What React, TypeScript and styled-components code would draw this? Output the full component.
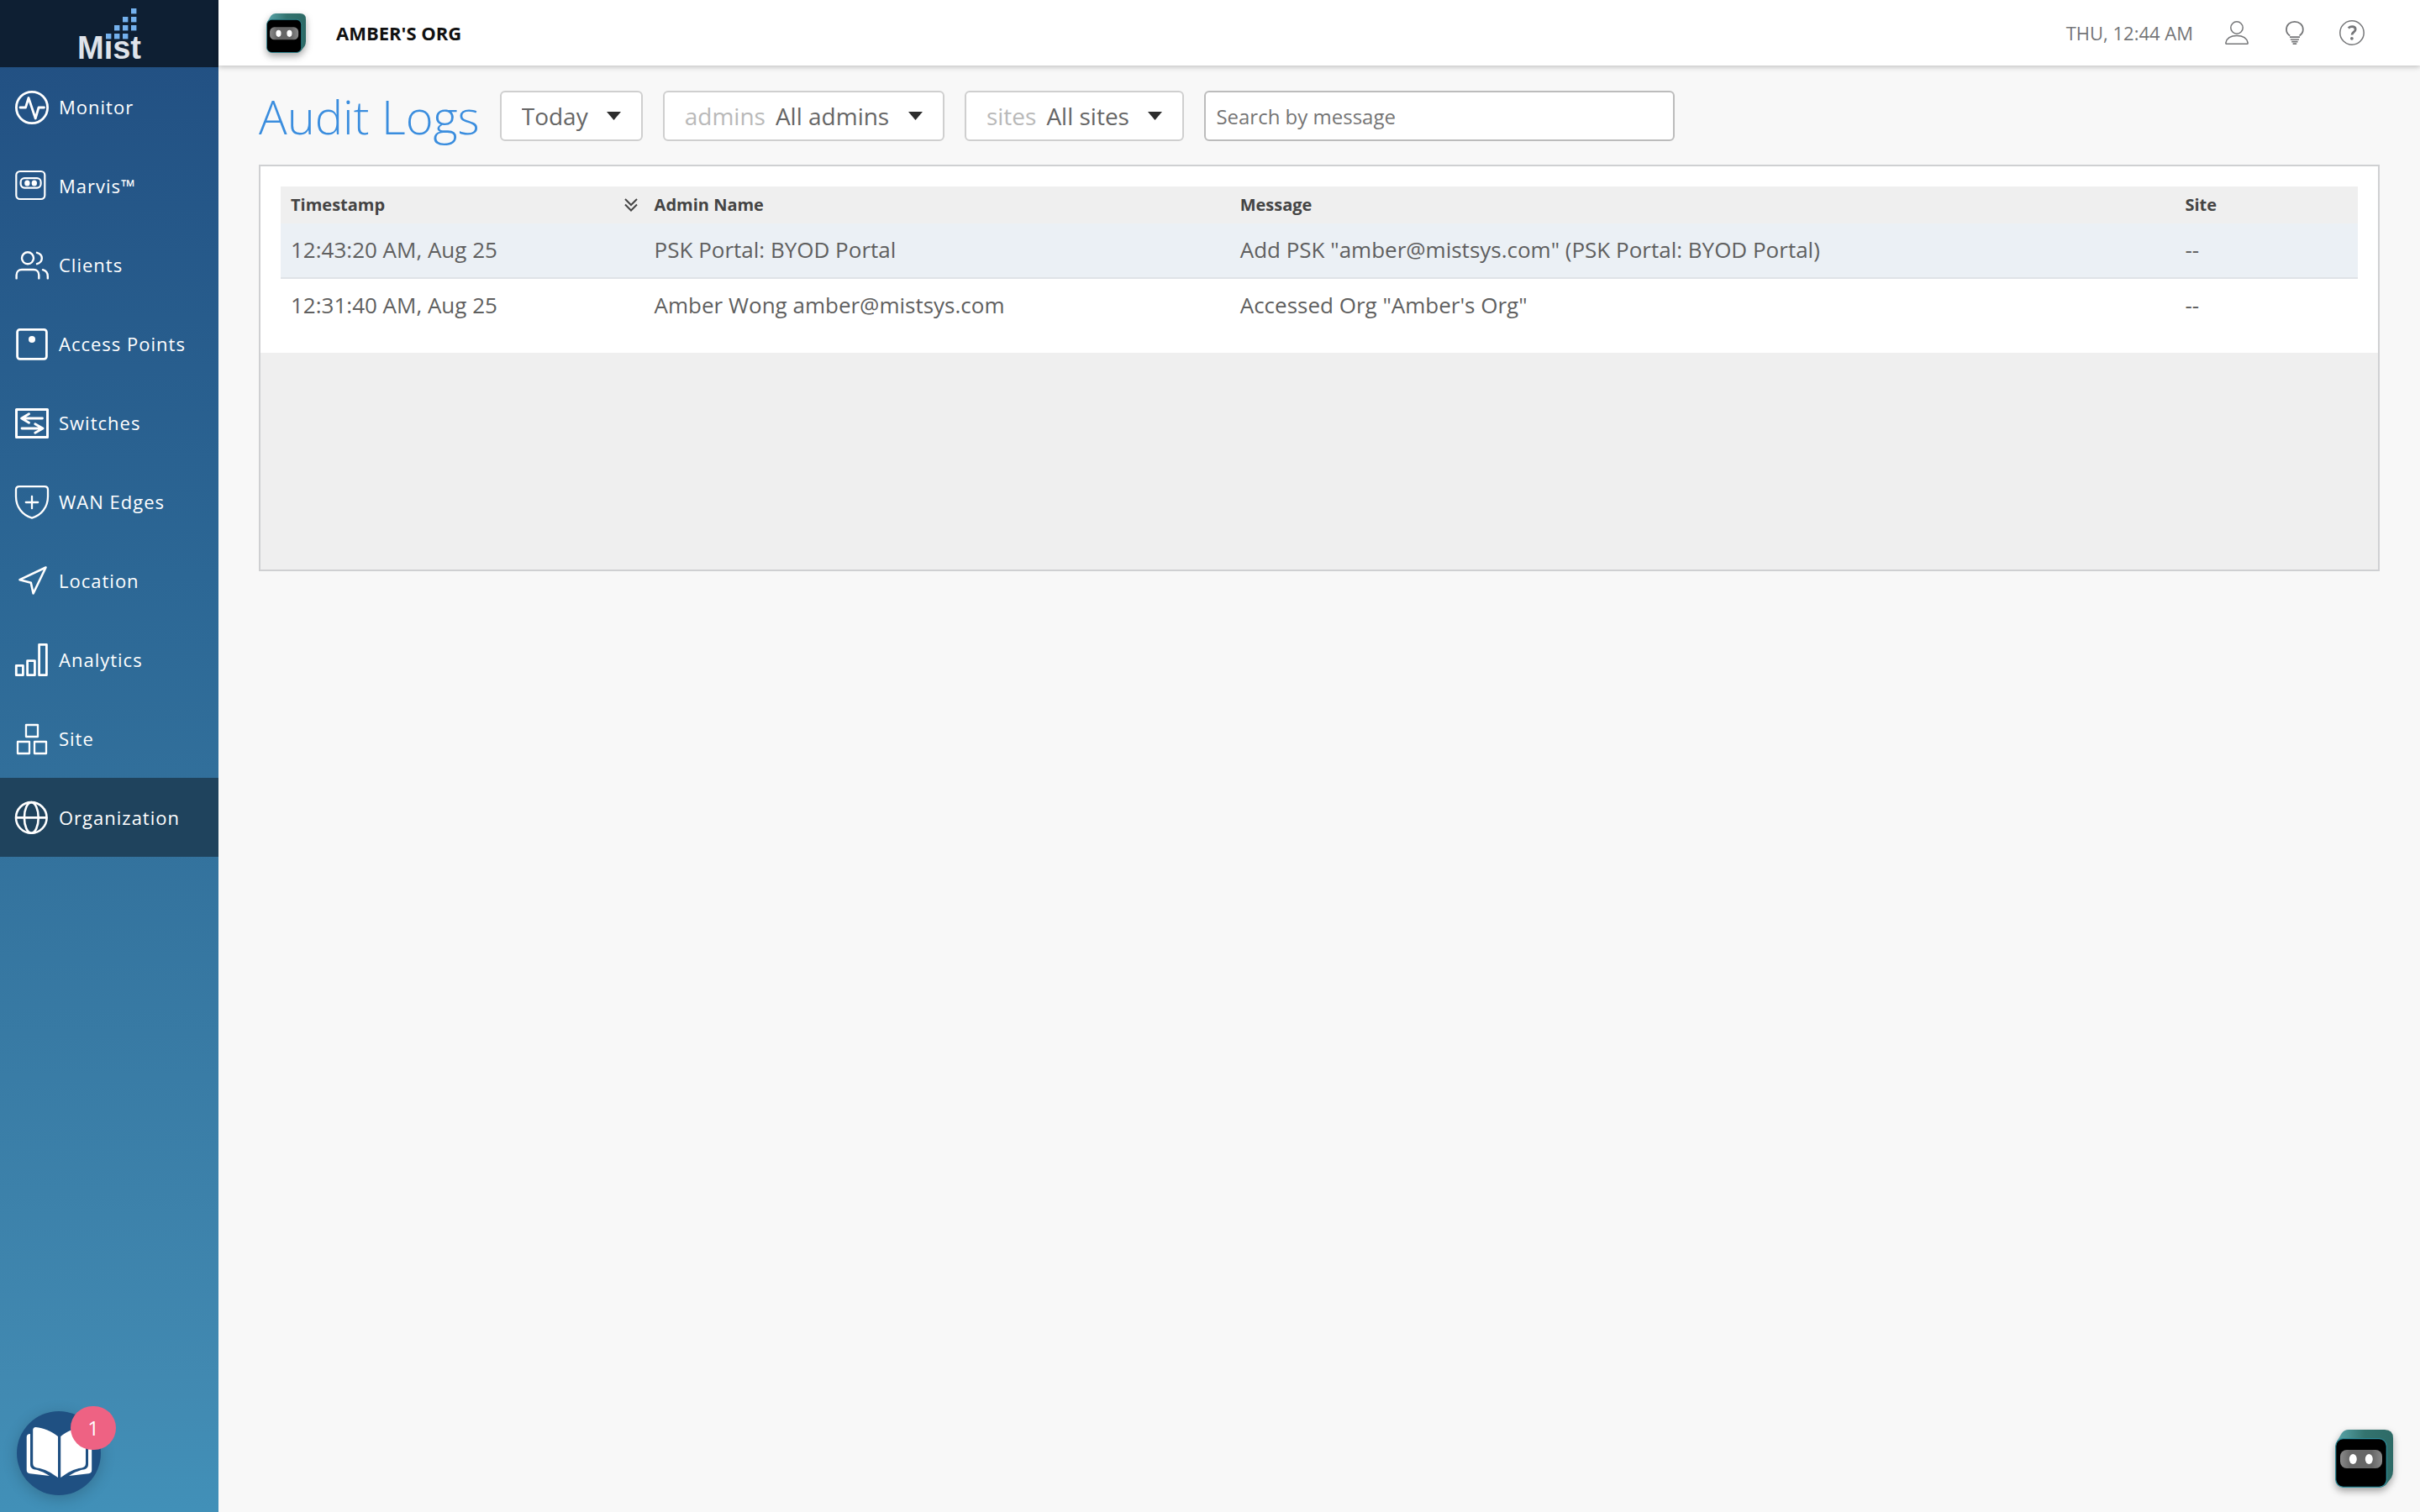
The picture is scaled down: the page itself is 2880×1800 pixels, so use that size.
import React from 'react';
import styled, { createGlobalStyle } from 'styled-components';

const GlobalStyle = createGlobalStyle`
  *, *::before, *::after { box-sizing: border-box; }
  body {
    margin: 0;
    background: #f8f8f8;
    color: #5f5f5f;
    font-family: "Open Sans", "Noto Sans", sans-serif;
    font-size: 26px;
  }
  button, input, select { font: inherit; color: inherit; }
`;

const Shell = styled.div`
  display: flex;
  min-height: 100vh;
`;

const Sidebar = styled.aside`
  flex: 0 0 260px;
  background: linear-gradient(180deg, #214e81 0%, #2c6795 38%, #33729d 56%, #4189b1 91%, #4190b8 100%);
`;

const LogoLink = styled.a`
  display: flex;
  justify-content: center;
  height: 80px;
  background: #0e1f33;
`;

const LogoText = styled.text`
  font-family: "Liberation Sans", Arial, sans-serif;
  font-size: 38px;
  font-weight: 700;
  fill: #dfe3ea;
`;

const NavLink = styled.a<{ $active?: boolean }>`
  display: flex;
  align-items: center;
  gap: 12px;
  height: 94px;
  padding: 0 18px;
  color: #fff;
  font-size: 22px;
  font-weight: 500;
  letter-spacing: 1px;
  line-height: 30px;
  text-decoration: none;
  white-space: nowrap;
  background: ${(p) => (p.$active ? '#1f435d' : 'transparent')};
`;

const NavIcon = styled.svg`
  flex: none;
  width: 40px;
  height: 40px;
  overflow: visible;
  fill: none;
  stroke: #fff;
  stroke-width: 2.8;
  stroke-linecap: round;
  stroke-linejoin: round;
`;

const Main = styled.div`
  flex: 1;
  min-width: 0;
`;

const TopBar = styled.header`
  position: relative;
  display: flex;
  align-items: center;
  height: 78px;
  padding: 0 66px 0 57px;
  background: #fff;
  box-shadow: 0 2px 6px rgba(0, 0, 0, 0.22);
`;

const IconButton = styled.button`
  display: flex;
  padding: 0;
  border: 0;
  background: none;
  color: #757678;
  cursor: pointer;
`;

const OrgName = styled.div`
  margin-left: 36px;
  color: #111;
  font-size: 22px;
  font-weight: 700;
  line-height: 30px;
`;

const TopTools = styled.div`
  display: flex;
  align-items: center;
  gap: 38px;
  margin-left: auto;
  color: #757678;
  font-size: 22px;
  line-height: 30px;
`;

const ToolIcon = styled.svg`
  width: 30px;
  height: 30px;
  overflow: visible;
  fill: none;
  stroke: currentColor;
  stroke-width: 1.5;
  stroke-linejoin: round;
`;

const Content = styled.main`
  padding: 30px 48px;
`;

const Filters = styled.div`
  display: flex;
  align-items: center;
  gap: 24px;
  margin-bottom: 28px;
`;

const Title = styled.h1`
  margin: 0;
  color: #3a8dde;
  font-size: 56px;
  font-weight: 300;
  line-height: 60px;
  white-space: nowrap;
`;

const Dropdown = styled.label`
  position: relative;
  display: flex;
  align-items: center;
  height: 60px;
  border: 2px solid #cfcfcf;
  border-radius: 6px;
  background: #fff;
  font-size: 28px;
  line-height: 38px;
`;

const DropdownName = styled.span`
  margin: 0 -12px 0 24px;
  color: #b9b9b9;
`;

const Select = styled.select`
  appearance: none;
  height: 56px;
  margin: 0;
  padding: 0 63px 0 24px;
  border: 0;
  background: none;
  color: #666;
  line-height: 38px;
  cursor: pointer;
`;

const Caret = styled.svg`
  position: absolute;
  right: 24px;
  width: 17px;
  height: 10px;
  fill: #2d2d2d;
  pointer-events: none;
`;

const Search = styled.input`
  width: 560px;
  height: 60px;
  padding: 0 12px;
  border: 2px solid #bcbcbc;
  border-radius: 6px;
  background: #fff;
  font-size: 24px;
  line-height: 34px;
  &::placeholder { color: #757575; opacity: 1; }
`;

const Panel = styled.section`
  min-height: 484px;
  border: 2px solid #cfd0d2;
  background: #efefef;
`;

const TableArea = styled.div`
  padding: 24px;
  background: #fff;
`;

const Table = styled.table`
  width: 100%;
  table-layout: fixed;
  border-collapse: separate;
  border-spacing: 0;
  text-align: left;
`;

const Col = styled.col<{ $share?: string }>`
  width: ${(p) => p.$share ?? 'auto'};
`;

const Th = styled.th`
  height: 44px;
  padding: 0 8px 0 12px;
  background: #efefef;
  color: #444;
  font-size: 20px;
  font-weight: 700;
  line-height: 28px;
`;

const SortHead = styled.div`
  display: flex;
  align-items: center;
  justify-content: space-between;
`;

const Row = styled.tr<{ $lit?: boolean }>`
  background: ${(p) => (p.$lit ? '#ebf0f5' : '#fff')};
  & > td { border-bottom: ${(p) => (p.$lit ? '2px solid #dfe3e7' : '0')}; }
`;

const Td = styled.td`
  padding: 13px 12px 15px;
  line-height: 36px;
`;

const GuideButton = styled.button`
  position: fixed;
  left: 20px;
  bottom: 20px;
  width: 100px;
  height: 100px;
  padding: 0;
  border: 0;
  border-radius: 50%;
  background: #1f5082;
  box-shadow: 0 4px 18px rgba(0, 0, 0, 0.2);
  cursor: pointer;
`;

const BookArt = styled.svg`
  display: block;
  width: 100px;
  height: 100px;
`;

const Badge = styled.span`
  position: absolute;
  top: -6px;
  right: -18px;
  min-width: 54px;
  border-radius: 26px;
  background: #ee6283;
  color: #fff;
  font-size: 24px;
  line-height: 52px;
  text-align: center;
`;

const AssistantButton = styled(IconButton)`
  position: fixed;
  right: 32px;
  bottom: 29px;
`;

const BotArt = styled.svg`
  display: block;
  overflow: visible;
  filter: drop-shadow(0 4px 4px rgba(0, 0, 0, 0.35));
`;

function Bot({ size, id }: { size: number; id: string }) {
  return (
    <BotArt width={size} height={size} viewBox="0 0 69 69" aria-hidden="true">
      <defs>
        <linearGradient id={`${id}-side`} x1="0" x2="1">
          <stop offset="0" stopColor="#5aa5aa" />
          <stop offset="0.5" stopColor="#33736f" />
          <stop offset="1" stopColor="#2d6a66" />
        </linearGradient>
        <linearGradient id={`${id}-visor`} x1="0" x2="1">
          <stop offset="0" stopColor="#8a8a8a" />
          <stop offset="0.25" stopColor="#666" />
          <stop offset="0.75" stopColor="#666" />
          <stop offset="1" stopColor="#8a8a8a" />
        </linearGradient>
      </defs>
      <path
        d="M2 14 L8 4 Q11 0 16 0 H59 Q69 0 69 10 V48 Q69 53 67 57 L60 66 Q56 69 50 69 H10 Z"
        fill={`url(#${id}-side)`}
      />
      <rect x="0.7" y="10.7" width="60.6" height="57.6" rx="9" fill="#000" stroke="#2f8d9b" strokeWidth="1.2" />
      <rect x="6" y="24" width="50" height="22" rx="8" fill={`url(#${id}-visor)`} />
      <ellipse cx="21.3" cy="35" rx="4.5" ry="6" fill="#fff" />
      <ellipse cx="40.3" cy="35" rx="4.5" ry="6" fill="#fff" />
    </BotArt>
  );
}

const navItems: { label: string; active?: boolean; icon: React.ReactNode }[] = [
  {
    label: 'Monitor',
    icon: (
      <>
        <circle cx="20" cy="21" r="18.6" />
        <path d="M6 21H12.5L16 9.5L24.2 34L28 21H34.5" />
      </>
    ),
  },
  {
    label: 'Marvis™',
    icon: (
      <>
        <rect x="1.3" y="3" width="34" height="33" rx="4.5" strokeWidth="2.2" />
        <rect x="6.6" y="11.2" width="24" height="11.4" rx="4.5" strokeWidth="2.2" />
        <ellipse cx="14.4" cy="17" rx="3.2" ry="3.6" fill="#fff" stroke="none" />
        <ellipse cx="22.8" cy="17" rx="3.2" ry="3.6" fill="#fff" stroke="none" />
      </>
    ),
  },
  {
    label: 'Clients',
    icon: (
      <g strokeWidth="2.4">
        <circle cx="15" cy="12.3" r="7" />
        <path d="M26 5.8C29.6 6.8 31.8 9.2 31.8 12.4S29.6 18 26 19.2" />
        <path d="M1.6 36.4V32.5C1.6 28.5 4.2 26 8 26H22C25.8 26 28.3 28.5 28.3 32.5V36.4" />
        <path d="M33 26.2C36.6 27.2 38.8 30 38.8 34V36.4" />
      </g>
    ),
  },
  {
    label: 'Access Points',
    icon: (
      <>
        <rect x="2.6" y="3.3" width="34.8" height="35" rx="3" />
        <circle cx="20" cy="15" r="4" fill="#fff" stroke="none" />
      </>
    ),
  },
  {
    label: 'Switches',
    icon: (
      <>
        <rect x="1.5" y="4.5" width="37" height="33" strokeWidth="3" />
        <path d="M32.5 15H8M16.5 9.8L7.6 15L16.5 20.2M8 27H33M23.8 21.8L33 27L23.8 32.2" />
      </>
    ),
  },
  {
    label: 'WAN Edges',
    icon: (
      <g strokeWidth="2.3">
        <path d="M5 2.2H35C37.6 2.2 39 3.6 39 6V14C39 27 31 36.5 20 39.6C9 36.5 1 27 1 14V6C1 3.6 2.4 2.2 5 2.2Z" />
        <path d="M12.8 21H27.2M20 13.8V28.2" />
      </g>
    ),
  },
  { label: 'Location', icon: <path d="M36.5 4.5L5.5 19.2L18.8 22.8L21.6 35.5Z" strokeWidth="2.6" /> },
  {
    label: 'Analytics',
    icon: (
      <>
        <path d="M1.3 27.3H9.4V38.7H1.3Z" />
        <path d="M14.6 21.6H23.4V38.7H14.6Z" />
        <path d="M28.6 2.3H37.4V38.7H28.6Z" />
      </>
    ),
  },
  {
    label: 'Site',
    icon: (
      <g strokeWidth="2.3">
        <rect x="13" y="4" width="14" height="14" />
        <rect x="3" y="24" width="14" height="14" />
        <rect x="23" y="24" width="14" height="14" />
      </g>
    ),
  },
  {
    label: 'Organization',
    active: true,
    icon: (
      <g strokeWidth="2.6">
        <circle cx="19.3" cy="20.4" r="18.3" />
        <ellipse cx="19.3" cy="20.4" rx="8.4" ry="18.3" />
        <path d="M1.5 20.4H37" />
      </g>
    ),
  },
];

const logoDots = [
  [159, 13], [149, 23], [159, 23], [139, 33], [149, 33], [159, 33], [129, 43], [139, 43], [149, 43],
];

const logs = [
  {
    time: '12:43:20 AM, Aug 25',
    admin: 'PSK Portal: BYOD Portal',
    message: 'Add PSK "amber@mistsys.com" (PSK Portal: BYOD Portal)',
    site: '--',
  },
  {
    time: '12:31:40 AM, Aug 25',
    admin: 'Amber Wong amber@mistsys.com',
    message: 'Accessed Org "Amber\'s Org"',
    site: '--',
  },
];

function Filter({ name, label, value }: { name?: string; label: string; value: string }) {
  return (
    <Dropdown>
      {name && <DropdownName>{name}</DropdownName>}
      <Select aria-label={label} defaultValue={value}>
        <option value={value}>{value}</option>
      </Select>
      <Caret viewBox="0 0 17 10" aria-hidden="true">
        <path d="M0 0H17L8.5 10Z" />
      </Caret>
    </Dropdown>
  );
}

export default function App() {
  return (
    <>
      <GlobalStyle />
      <Shell>
        <Sidebar>
          <LogoLink href="#home" aria-label="Mist">
            <svg width="260" height="80" viewBox="0 0 260 80">
              <LogoText x="92" y="70">Mist</LogoText>
              <rect x="124" y="38" width="10" height="10" fill="#0e1f33" />
              {logoDots.map(([x, y]) => (
                <rect key={`${x}-${y}`} x={x - 3} y={y - 3} width="6.4" height="6.4" fill="#74b1ee" />
              ))}
            </svg>
          </LogoLink>
          <nav>
            {navItems.map((item) => (
              <NavLink key={item.label} href="#nav" $active={item.active} aria-current={item.active ? 'page' : undefined}>
                <NavIcon viewBox="0 0 40 40" aria-hidden="true">{item.icon}</NavIcon>
                {item.label}
              </NavLink>
            ))}
          </nav>
        </Sidebar>
        <Main>
          <TopBar>
            <IconButton aria-label="Marvis">
              <Bot size={47} id="bot-top" />
            </IconButton>
            <OrgName>AMBER'S ORG</OrgName>
            <TopTools>
              <span>THU, 12:44 AM</span>
              <IconButton aria-label="Account">
                <ToolIcon viewBox="0 0 30 30">
                  <circle cx="14" cy="9" r="7.2" />
                  <path d="M1.6 28.2C0.9 28.2 0.8 27.6 0.9 27C2 21.6 6 18.6 14 18.6S26 21.6 27.1 27C27.2 27.6 27.1 28.2 26.4 28.2Z" />
                </ToolIcon>
              </IconButton>
              <IconButton aria-label="What's new">
                <ToolIcon viewBox="0 0 30 30">
                  <path d="M9.2 18.5C6.4 16.6 5 14.2 5 11.2C5 5.6 9.2 1.8 14.8 1.8S24.8 5.6 24.8 11.2C24.8 14.2 23.2 16.6 20.6 18.5" strokeWidth="1.8" />
                  <path d="M9 20.2H21M9.8 23H20M11.2 25.6H18.6M12.6 28.2H17.2" strokeWidth="1.7" />
                </ToolIcon>
              </IconButton>
              <IconButton aria-label="Help">
                <ToolIcon viewBox="0 0 30 30">
                  <circle cx="15" cy="15" r="14.2" />
                  <path d="M10.8 9.4C12 8.2 13.4 7.7 15.2 7.7C17.6 7.7 19.2 8.9 19.2 10.9C19.2 14.2 15 14 15 17.6" strokeWidth="2.8" />
                  <circle cx="14.9" cy="21.8" r="1.9" fill="currentColor" stroke="none" />
                </ToolIcon>
              </IconButton>
            </TopTools>
          </TopBar>
          <Content>
            <Filters>
              <Title>Audit Logs</Title>
              <Filter label="Time range" value="Today" />
              <Filter name="admins" label="Admins" value="All admins" />
              <Filter name="sites" label="Sites" value="All sites" />
              <Search type="text" placeholder="Search by message" aria-label="Search by message" />
            </Filters>
            <Panel>
              <TableArea>
                <Table>
                  <colgroup>
                    <Col $share="17.5%" />
                    <Col $share="28.2%" />
                    <Col $share="45.5%" />
                    <Col />
                  </colgroup>
                  <thead>
                    <tr>
                      <Th>
                        <SortHead>
                          Timestamp
                          <svg width="16" height="16" viewBox="0 0 16 16" fill="none" stroke="#444" strokeWidth="2" aria-hidden="true">
                            <path d="M1 1L8 8L15 1M1 7.5L8 14.5L15 7.5" />
                          </svg>
                        </SortHead>
                      </Th>
                      <Th>Admin Name</Th>
                      <Th>Message</Th>
                      <Th>Site</Th>
                    </tr>
                  </thead>
                  <tbody>
                    {logs.map((log, i) => (
                      <Row key={log.time} $lit={i === 0}>
                        <Td>{log.time}</Td>
                        <Td>{log.admin}</Td>
                        <Td>{log.message}</Td>
                        <Td>{log.site}</Td>
                      </Row>
                    ))}
                  </tbody>
                </Table>
              </TableArea>
            </Panel>
          </Content>
        </Main>
      </Shell>
      <GuideButton aria-label="Guides, 1 new">
        <BookArt viewBox="0 0 100 100" aria-hidden="true">
          <g fill="#fff">
            <path d="M16 27C13 27 11.7 28.6 11.7 31V70C11.7 72.6 13 74 15.6 74.2L39 77C31 72 26 70.4 21.6 69.6C17.6 68.8 16 66.6 16 63Z" />
            <path d="M85 27C88 27 89.2 28.6 89.2 31V70C89.2 72.6 88 74 85.4 74.2L62 77C70 72 75 70.4 79.4 69.6C83.4 68.8 85 66.6 85 63Z" />
            <path d="M49 30C41 23.5 32 20 22.5 19C20.4 19 19.2 20.2 19.2 22.6V62C19.2 65.4 20.8 67 24 67.4C33 68.4 41 73 49 79Z" />
            <path d="M52.2 30C60 23.5 69 20 78.6 19C80.8 19 82 20.2 82 22.6V62C82 65.4 80.4 67 77.2 67.4C68 68.4 60.2 73 52.2 79Z" />
          </g>
        </BookArt>
        <Badge>1</Badge>
      </GuideButton>
      <AssistantButton aria-label="Open Marvis assistant">
        <Bot size={69} id="bot-float" />
      </AssistantButton>
    </>
  );
}
